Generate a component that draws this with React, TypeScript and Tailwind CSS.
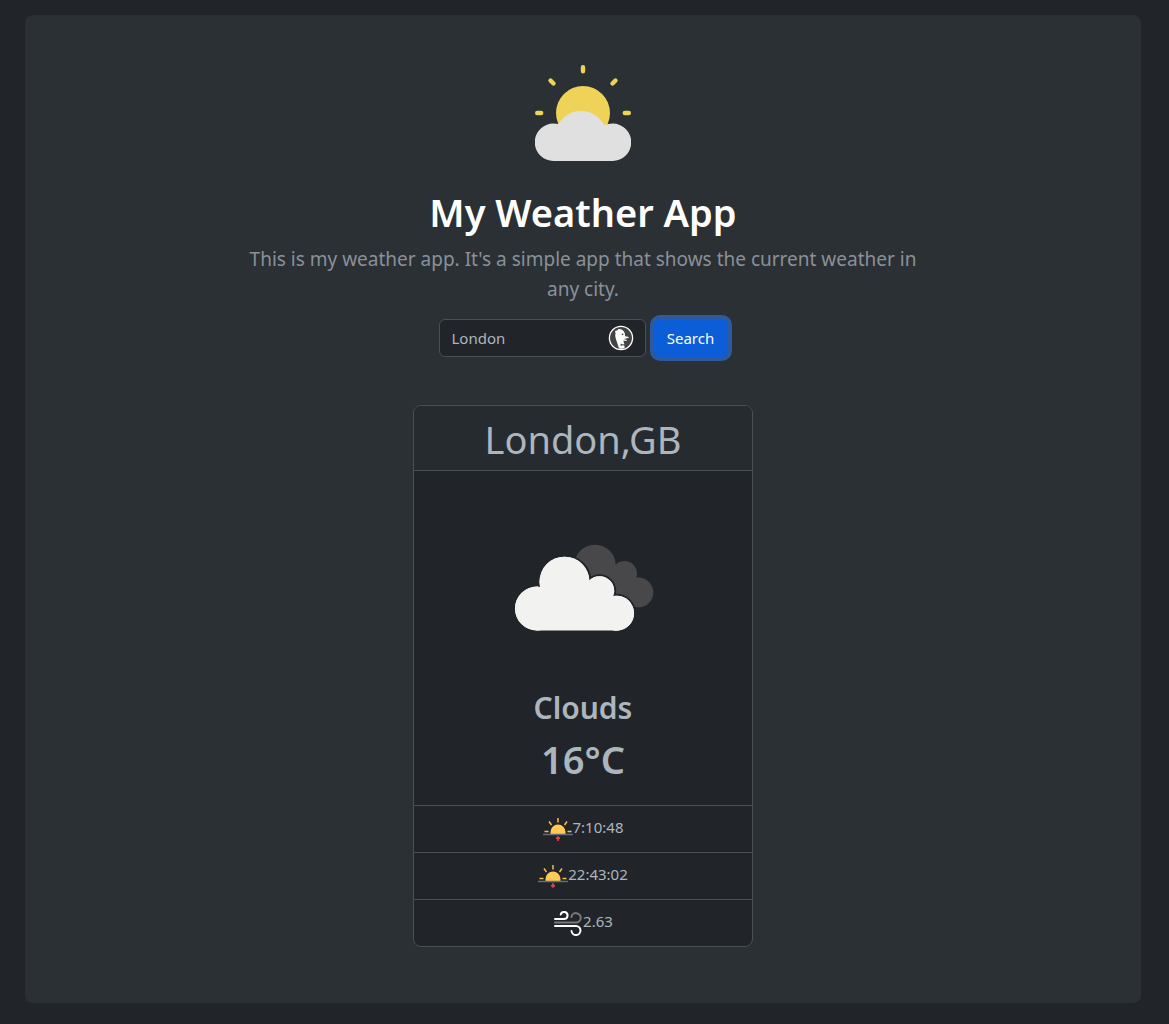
import { useState, type ReactNode } from "react";

function PartlySunny() {
  return (
    <svg className="size-24" viewBox="0 0 96 96" aria-hidden="true">
      <g stroke="#efd358" strokeWidth="4.400" strokeLinecap="round">
        <path d="M48 2.200v4M15.500 15.500l3 3M80.500 15.500l-3 3M2.200 48h4M89.800 48h4" />
      </g>
      <circle cx="48" cy="48" r="27" fill="#efd358" />
      <path
        fill="#e0e0e0"
        d="M18.500 96A18.500 18.500 0 0 1 18.500 58.500Q21 58.500 23.500 59A26 26 0 0 1 69 60Q73 58.500 77.500 58.500A18.700 18.700 0 0 1 77.500 96Z"
      />
    </svg>
  );
}

function BrokenClouds() {
  return (
    <svg className="h-50 w-50" viewBox="0 0 200 200" aria-hidden="true">
      <g fill="#48484a">
        <circle cx="112" cy="76.500" r="20.800" />
        <circle cx="141.500" cy="84.500" r="12.500" />
        <circle cx="155.300" cy="103.500" r="15" />
        <path d="M112 76h29l14 27-10 12-33-15z" />
      </g>
      <g fill="#f2f2f0" stroke="#212529" strokeWidth="4" paintOrder="stroke">
        <circle cx="54" cy="119.500" r="22" />
        <circle cx="81.500" cy="92.700" r="25" />
        <circle cx="116.500" cy="102" r="14.700" />
        <circle cx="133.500" cy="124.200" r="17.500" />
      </g>
      <g fill="#f2f2f0">
        <circle cx="54" cy="119.500" r="22" />
        <circle cx="81.500" cy="92.700" r="25" />
        <circle cx="116.500" cy="102" r="14.700" />
        <path d="M54 100h65l14.500 10v31.600H54z" />
        <circle cx="133.500" cy="124.200" r="17.500" />
      </g>
    </svg>
  );
}

function Sun({ setting = false }: { setting?: boolean }) {
  return (
    <svg className="size-[30px]" viewBox="0 0 30 30" aria-hidden="true">
      <g stroke="#f5bd4b" strokeWidth="1.500">
        <path d="M15 4v4.500M6 7.500l2.500 3.500M24 7.500l-2.500 3.500M1.500 17.500h4M24.500 17.500h4" />
      </g>
      <path d="M7.500 20v-2a7.500 7.500 0 0 1 15 0v2z" fill="#ffcb55" />
      <path d="M0 20.500h30" stroke="#656d78" strokeWidth="1.500" />
      <path
        d={
          setting
            ? "M14.200 22h1.600v1.800l1.200.3v1.200l-2 1.700-2-1.700v-1.200l1.200-.3z"
            : "M13 23.700l2-1.700 2 1.700v1.200l-1.200.3v1.800h-1.600v-1.800l-1.200-.3z"
        }
        fill="#da4453"
      />
    </svg>
  );
}

function Wind() {
  return (
    <svg className="size-[30px]" viewBox="0 0 30 30" fill="none" strokeWidth="2" strokeLinecap="round" aria-hidden="true">
      <path d="M2 14.500h21a4.700 4.700 0 1 0-4.600-5.500" stroke="#77797b" />
      <path d="M2 11h9a3.500 3.500 0 1 0-3.300-4.500M2 18h21a4.500 4.500 0 1 1-4.500 5" stroke="#fff" />
    </svg>
  );
}

function DuckBadge() {
  return (
    <svg className="size-[26px]" viewBox="0 0 26 26" aria-hidden="true">
      <circle cx="13" cy="13" r="11.600" fill="#444" stroke="#fff" strokeWidth="1.300" />
      <path
        fill="#fff"
        d="M7 6l2.500-.8 1-1.200c3-.2 5.500 1.500 6.300 4.500l.4 2.800 2.800.5 1.200.8-3.700 1.100-2 .2 3.500 1.200-.7.800-3-.5.5 1.800.7 2.200v3.500l-2.500.8-3-.3-1.600-5-1.500-4.500-.7-3 .3-2.800z"
      />
      <path d="M13.800 8.600h1.500v1.500h-1.500z" fill="#444" />
      <path d="M12.500 18.500l2.500 1 2-1v2.500l-2-.7-2.300.7z" fill="#555" />
    </svg>
  );
}

function Row({ icon, children }: { icon: ReactNode; children: ReactNode }) {
  return (
    <li className="flex h-[47px] items-center justify-center border-t border-[#495057] text-[15px]">
      {icon}
      <span className="pb-1">{children}</span>
    </li>
  );
}

export default function App() {
  const [city, setCity] = useState("London");
  return (
    <div className="min-h-screen bg-[#212529] pt-[15px] pr-7 pb-5 pl-[25px] font-['Noto_Sans',sans-serif] text-[#adb5bd]">
      <main className="flex flex-col items-center rounded-lg bg-[#2b3035] px-4 pt-[50px] pb-14 text-center">
        <PartlySunny />
        <h1 className="mt-[27px] text-[38px] leading-12 font-semibold text-white">My Weather App</h1>
        <p className="mt-2 max-w-[680px] text-[19px] leading-[30px] text-[#8a9097]">
          This is my weather app. It's a simple app that shows the current weather in any city.
        </p>
        <form className="mt-[15px] flex gap-2" onSubmit={(e) => e.preventDefault()}>
          <div className="relative">
            <input
              aria-label="City"
              className="h-[38px] w-[207px] rounded-md border border-[#495057] bg-[#212529] pr-10 pl-3 text-[15px] outline-none"
              value={city}
              onChange={(e) => setCity(e.target.value)}
            />
            <span className="absolute top-1.5 right-3">
              <DuckBadge />
            </span>
          </div>
          <button className="h-[38px] w-[74px] rounded-md bg-[#0b5ed7] text-[15px] text-white ring-4 ring-[#2c5a9c]">
            Search
          </button>
        </form>
        <section className="mt-12 w-[340px] max-w-full overflow-hidden rounded-lg border border-[#495057] bg-[#212529]">
          <h2 className="bg-[#262b2f] pt-[9px] pb-[7px] text-[38px] leading-12">London,GB</h2>
          <div className="flex flex-col items-center border-t border-[#495057] pt-[18px] pb-[22px]">
            <BrokenClouds />
            <p className="text-[30px] leading-[38px] font-semibold">Clouds</p>
            <p className="mt-2 text-[38px] leading-12 font-semibold">16°C</p>
          </div>
          <ul>
            <Row icon={<Sun />}>7:10:48</Row>
            <Row icon={<Sun setting />}>22:43:02</Row>
            <Row icon={<Wind />}>2.63</Row>
          </ul>
        </section>
      </main>
    </div>
  );
}
